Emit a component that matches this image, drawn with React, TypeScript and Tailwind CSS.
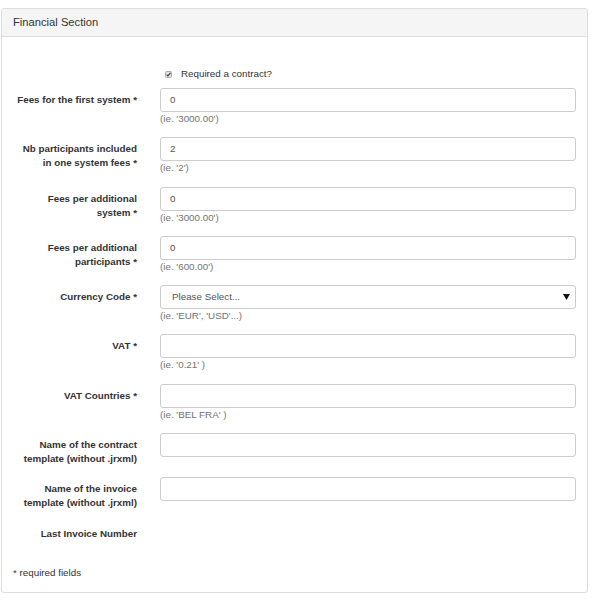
import React from 'react';

type Field = {
  label: string[];
  value?: string;
  help?: string;
  select?: boolean;
  none?: boolean;
};

const FIELDS: Field[] = [
  { label: ['Fees for the first system *'], value: '0', help: "(ie. '3000.00')" },
  { label: ['Nb participants included', 'in one system fees *'], value: '2', help: "(ie. '2')" },
  { label: ['Fees per additional', 'system *'], value: '0', help: "(ie. '3000.00')" },
  { label: ['Fees per additional', 'participants *'], value: '0', help: "(ie. '600.00')" },
  { label: ['Currency Code *'], select: true, help: "(ie. 'EUR', 'USD'...)" },
  { label: ['VAT *'], value: '', help: "(ie. '0.21' )" },
  { label: ['VAT Countries *'], value: '', help: "(ie. 'BEL FRA' )" },
  { label: ['Name of the contract', 'template (without .jrxml)'], value: '' },
  { label: ['Name of the invoice', 'template (without .jrxml)'], value: '' },
  { label: ['Last Invoice Number'], none: true },
];

const Row: React.FC<{ f: Field }> = ({ f }) => (
  <div className="flex mb-[11.3px]">
    <div className="w-[135px] shrink-0 pt-[5px] text-right font-bold text-[#333]">
      {f.label.map((l, i) => (
        <div key={i}>{l}</div>
      ))}
    </div>
    {!f.none && (
      <div className="ml-[23px] w-[416px]">
        {f.select ? (
          <div className="h-[24px] flex items-center justify-between border border-[#ccc] rounded-[3px] bg-white pl-[11px] pr-[5px] text-[#555]">
            <span>Please Select...</span>
            <svg width="7" height="6" viewBox="0 0 7 6">
              <path d="M0 0 L7 0 L3.5 6 Z" fill="#111" />
            </svg>
          </div>
        ) : (
          <div className="h-[24px] flex items-center border border-[#ccc] rounded-[3px] bg-white px-[9px] text-[#555]">
            {f.value}
          </div>
        )}
        {f.help && <div className="text-[#737373]">{f.help}</div>}
      </div>
    )}
  </div>
);

export default function App() {
  return (
    <div className="bg-white min-h-[600px] pt-[8px] pl-[1px] font-['Liberation_Sans',Arial,sans-serif] text-[9.8px] leading-[14px] text-[#333]">
      <div className="w-[587px] border border-[#ddd] rounded-[3px]">
        <div className="h-[28px] flex items-center pl-[11px] pb-[1px] bg-[#f5f5f5] border-b border-[#ddd] rounded-t-[3px] text-[11.2px] text-[#333]">
          Financial Section
        </div>
        <div className="pt-[30px] pb-[12px]">
          <div className="flex items-center ml-[163px] mb-[7px]">
            <svg width="7" height="7" viewBox="0 0 7 7" className="shrink-0">
              <rect x="0.5" y="0.5" width="6" height="6" rx="1" fill="#e4e4e4" stroke="#a8a8a8" />
              <path d="M1.6 3.6 L2.9 4.9 L5.5 1.8" fill="none" stroke="#444" strokeWidth="1.3" />
            </svg>
            <span className="ml-[9px]">Required a contract?</span>
          </div>
          {FIELDS.map((f, i) => (
            <Row key={i} f={f} />
          ))}
          <div className="pl-[11px] mt-[25px]">* required fields</div>
        </div>
      </div>
    </div>
  );
}
